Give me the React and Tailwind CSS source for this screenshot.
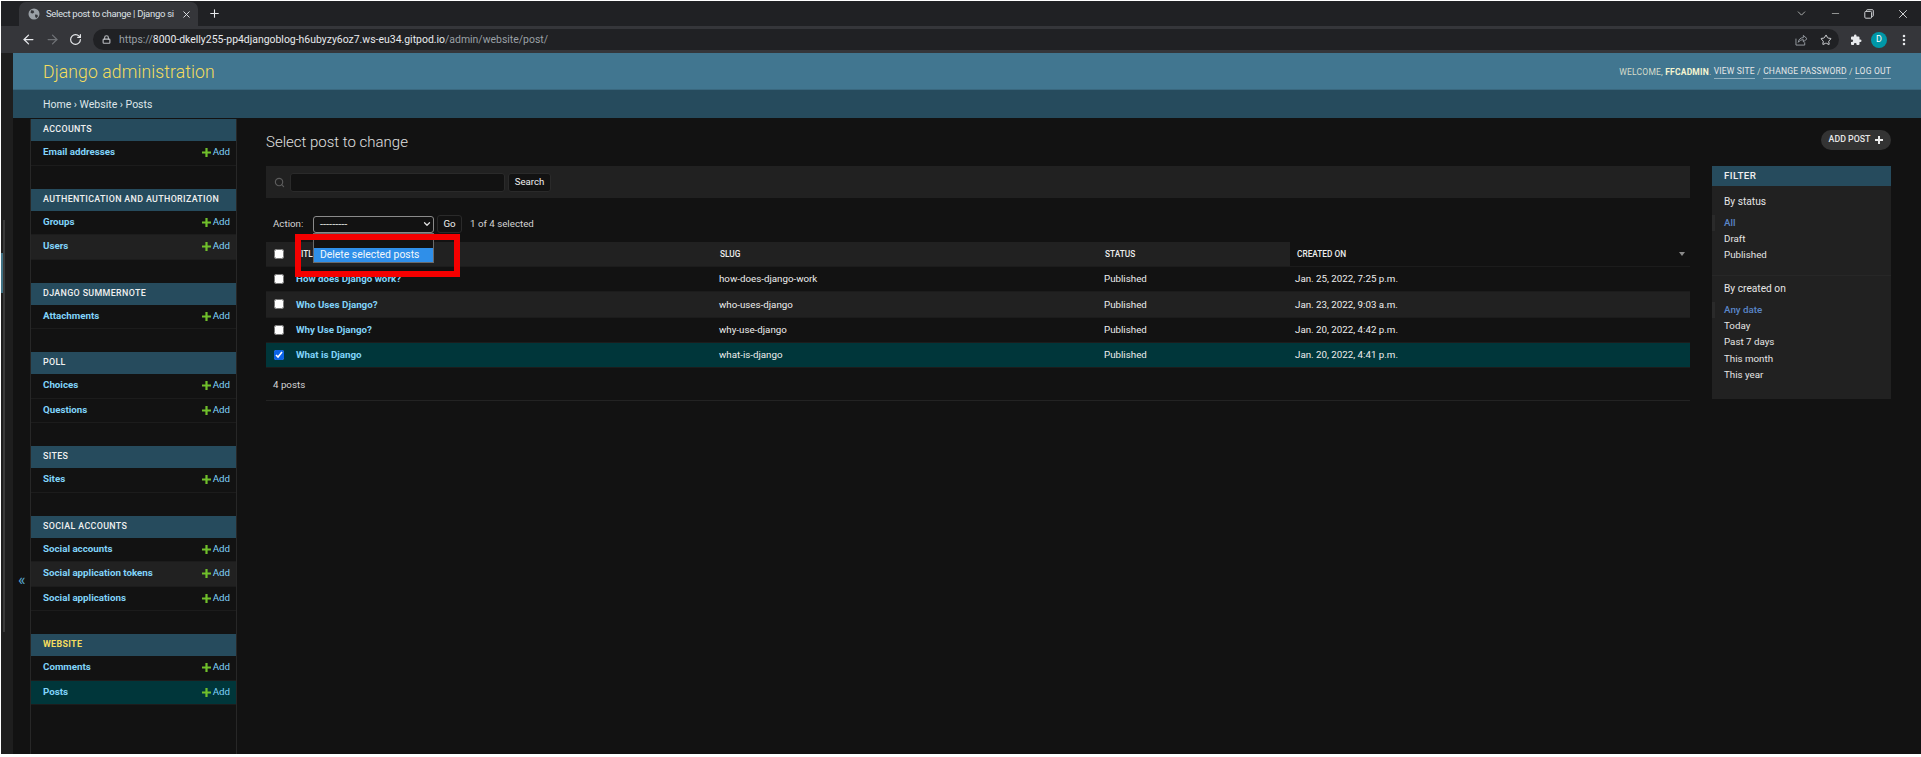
import React from "react";
import { ArrowLeft, ArrowRight, RotateCw, Lock, X, Plus, ChevronDown, Minus, Star, EllipsisVertical, Search } from "lucide-react";

const modules = [
  { name: "ACCOUNTS", rows: ["Email addresses"] },
  { name: "AUTHENTICATION AND AUTHORIZATION", rows: ["Groups", "Users"] },
  { name: "DJANGO SUMMERNOTE", rows: ["Attachments"] },
  { name: "POLL", rows: ["Choices", "Questions"] },
  { name: "SITES", rows: ["Sites"] },
  { name: "SOCIAL ACCOUNTS", rows: ["Social accounts", "Social application tokens", "Social applications"] },
  { name: "WEBSITE", rows: ["Comments", "Posts"], current: true },
];

const posts = [
  ["How does Django work?", "how-does-django-work", "Jan. 25, 2022, 7:25 p.m."],
  ["Who Uses Django?", "who-uses-django", "Jan. 23, 2022, 9:03 a.m."],
  ["Why Use Django?", "why-use-django", "Jan. 20, 2022, 4:42 p.m."],
  ["What is Django", "what-is-django", "Jan. 20, 2022, 4:41 p.m."],
];

function GreenPlus() {
  return (
    <svg width="9" height="9" viewBox="0 0 9 9" className="shrink-0">
      <path d="M3.4 0h2.2v3.4H9v2.2H5.6V9H3.4V5.6H0V3.4h3.4z" fill="#70bf2b" />
    </svg>
  );
}

function ChromeBar() {
  return (
    <div className="shrink-0 font-['Roboto',sans-serif]">
      <div className="h-[25px] bg-[#202124] flex items-end pl-[18px] pr-[11px] relative">
        <div className="w-[179px] h-[24px] bg-[#35363a] rounded-t-[7px] flex items-center pl-[9px] pr-[6px] text-[#dee1e6] text-[9.5px] tracking-[-0.3px]">
          <svg width="12" height="12" viewBox="0 0 12 12" className="shrink-0">
            <circle cx="6" cy="6" r="5.5" fill="#9aa0a6" />
            <path d="M3 2.2l2.4.4.9 1.6-1.5 1.4-2.2-.6zM7 6.6l2.4.2.6 1.4-1.8 2-1-1.4z" fill="#35363a" />
          </svg>
          <span className="ml-[6px] whitespace-nowrap">Select post to change | Django si</span>
          <X size={11} strokeWidth={2} className="ml-auto text-[#e8eaed]" />
        </div>
        <Plus size={13} strokeWidth={2} className="ml-[10px] mb-[6px] text-[#e8eaed]" />
        <div className="ml-auto flex items-center self-center text-[#c4c7c5]">
          <ChevronDown size={13} strokeWidth={1.5} />
          <Minus size={11} strokeWidth={1.5} className="ml-[22px]" />
          <svg width="10" height="10" viewBox="0 0 10 10" className="ml-[23px]" fill="none" stroke="#d0d3d6" strokeWidth="1">
            <rect x="0.8" y="2.4" width="6.8" height="6.8" rx="1" />
            <path d="M2.6 2.2V1.4c0-.4.3-.7.7-.7h5.2c.4 0 .8.4.8.8v5.2c0 .4-.3.7-.7.7h-.8" />
          </svg>
          <X size={14} strokeWidth={1.5} className="ml-[22px] text-[#e8eaed]" />
        </div>
      </div>
      <div className="h-[27px] bg-[#35363a] flex items-center pl-[20px]">
        <ArrowLeft size={15} strokeWidth={2} className="text-[#e8eaed]" />
        <ArrowRight size={15} strokeWidth={2} className="ml-[9px] text-[#6f7276]" />
        <RotateCw size={13} strokeWidth={2.2} className="ml-[9px] text-[#e8eaed]" />
        <div className="ml-[11px] w-[1746px] h-[21px] rounded-full bg-[#202124] flex items-center pl-[9px] pr-[7px] text-[10.45px] whitespace-nowrap">
          <Lock size={9} strokeWidth={3} className="text-[#b8bbbf]" />
          <span className="ml-[8px] text-[#9aa0a6]">https://</span>
          <span className="text-[#e8eaed]">8000-dkelly255-pp4djangoblog-h6ubyzy6oz7.ws-eu34.gitpod.io</span>
          <span className="text-[#9aa0a6]">/admin/website/post/</span>
          <svg width="13" height="12" viewBox="0 0 14 13" fill="none" stroke="#9aa0a6" strokeWidth="1" className="ml-auto">
            <path d="M1 5v7h9.5V9" />
            <path d="M3.5 9C4 5.5 6 4 9 4V1.5l4 3.6-4 3.5V6.2C6.7 6.2 5 7 3.5 9z" />
          </svg>
          <Star size={12} strokeWidth={2} className="ml-[12px] text-[#d5d7da]" />
        </div>
        <svg width="12" height="12" viewBox="0 0 24 24" className="ml-[11px] shrink-0" fill="#e8eaed">
          <path d="M20.5 11H19V7a2 2 0 0 0-2-2h-4V3.5a2.5 2.5 0 0 0-5 0V5H4a2 2 0 0 0-2 2v3.8h1.5a2.7 2.7 0 0 1 0 5.4H2V20a2 2 0 0 0 2 2h3.8v-1.5a2.7 2.7 0 0 1 5.4 0V22H17a2 2 0 0 0 2-2v-4h1.5a2.5 2.5 0 0 0 0-5z" />
        </svg>
        <div className="ml-[9px] w-[16px] h-[16px] rounded-full bg-[#0097a7] text-white text-[9px] flex items-center justify-center shrink-0">D</div>
        <EllipsisVertical size={14} strokeWidth={2.4} className="ml-[10px] text-[#e8eaed]" />
      </div>
    </div>
  );
}

function Sidebar() {
  return (
    <div className="w-[207px] shrink-0 border-x border-[#272727] bg-[#121212]">
      {modules.map((m) => (
        <div key={m.name} className="mb-[23px]">
          <div className={`h-[22px] bg-[#264b5d] pl-[12px] flex items-center whitespace-nowrap text-[8.9px] tracking-[0.35px] ${m.current ? "font-bold text-[#f5dd5d]" : "font-medium text-[#f0f0f0]"}`}>
            {m.name}
          </div>
          {m.rows.map((r, i) => (
            <div
              key={r}
              className={`h-[24.5px] flex items-center justify-between pl-[12px] pr-[6px] border-b border-[#1c1c1c] text-[9.75px] ${r === "Posts" ? "bg-[#00363a]" : i === 1 && m.rows.length > 1 && m.name !== "POLL" && m.name !== "WEBSITE" ? "bg-[#212121]" : ""}`}
            >
              <span className="font-bold text-[#81d4fa]">{r}</span>
              <span className="flex items-center gap-[2px] text-[#81d4fa]">
                <GreenPlus />
                Add
              </span>
            </div>
          ))}
        </div>
      ))}
    </div>
  );
}

const rowGrid = "grid grid-cols-[30px_423px_385px_186px_1fr] items-center";

function Changelist() {
  return (
    <div className="flex-1 min-w-0">
      <div className="h-[32px] bg-[#212121] flex items-center pl-[8px]">
        <Search size={11} strokeWidth={2.5} className="text-[#5c5c5c]" />
        <div className="ml-[5px] w-[215px] h-[19px] bg-[#121212] border border-[#2a2a2a] rounded-[3px]" />
        <div className="ml-[3px] w-[43px] h-[19px] bg-[#121212] border border-[#2a2a2a] rounded-[3px] flex items-center justify-center text-[9.6px] text-[#f0f0f0]">Search</div>
      </div>
      <div className="h-[44px] relative flex items-center pl-[7px] pt-[8px] text-[9.75px] text-[#d5d5d5]">
        <span className="w-[30px]">Action:</span>
        <div className="ml-[10px] w-[121px] h-[17px] bg-[#121212] border border-[#8a8a8a] rounded-[3px] flex items-center justify-between pl-[6px] pr-[1px] text-[#e0e0e0]">
          <span className="leading-none text-[11px]">---------</span>
          <ChevronDown size={10} strokeWidth={3} />
        </div>
        <div className="ml-[3px] w-[25px] h-[18px] bg-[#121212] border border-[#2a2a2a] rounded-[3px] flex items-center justify-center text-[#f0f0f0]">Go</div>
        <span className="ml-[8px]">1 of 4 selected</span>
        <div className="absolute left-[47px] top-[35px] w-[121px] h-[30px] bg-[#121212] border border-[#6a6a6a] text-[10.4px] text-[#e8e8e8] z-10">
          <div className="h-[14px] pl-[6px] leading-[12px]">---------</div>
          <div className="h-[14px] pl-[6px] leading-[14px] bg-[#2f8fe9] text-[#f2f7fb]">Delete selected posts</div>
        </div>
        <div className="absolute left-[29px] top-[36px] w-[165px] h-[43px] border-[6px] border-[#f50000] z-20" />
      </div>
      <div className={`${rowGrid} h-[25px] bg-[#212121] border-b border-[#1c1c1c] text-[8.3px] font-medium text-[#ededed]`}>
        <input type="checkbox" readOnly className="ml-[8px] w-[10px] h-[10px] m-0" />
        <span>TITLE</span>
        <span className="pl-[1px]">SLUG</span>
        <span className="pl-[1px]">STATUS</span>
        <div className="h-full bg-[#121212] flex items-center justify-between pl-[7px] pr-[5px]">
          <span>CREATED ON</span>
          <svg width="6" height="4" viewBox="0 0 6 4"><path d="M0 0h6L3 4z" fill="#8a8a8a" /></svg>
        </div>
      </div>
      {posts.map((p, i) => (
        <div
          key={p[1]}
          className={`${rowGrid} h-[25.25px] border-b border-[#1c1c1c] text-[9.75px] text-[#eeeeee] ${i === 1 ? "bg-[#212121]" : i === 3 ? "bg-[#00363a]" : ""}`}
        >
          <input type="checkbox" readOnly checked={i === 3} className="ml-[8px] w-[10px] h-[10px] m-0 accent-[#0b63e5]" />
          <span className="font-bold text-[#81d4fa] pt-[1px]">{p[0]}</span>
          <span className="pt-[1px]">{p[1]}</span>
          <span className="pt-[1px]">Published</span>
          <span className="pl-[5px] pt-[1px]">{p[2]}</span>
        </div>
      ))}
      <div className="h-[33px] border-b border-[#232323] pl-[7px] pt-[2px] flex items-center text-[9.75px] text-[#d5d5d5]">4 posts</div>
    </div>
  );
}

function FilterGroup({ title, items, last }) {
  return (
    <div className={last ? "" : "border-b border-[#272727] pb-[11px] mb-[1px]"}>
      <div className="h-[22px] pl-[12px] pt-[2px] flex items-center text-[10.2px] text-[#e6e6e6]">{title}</div>
      <div className="mt-[3px]">
        {items.map((it, i) => (
          <div
            key={it}
            className={`h-[16.3px] flex items-center text-[9.75px] ${i === 0 ? "pl-[9px] border-l-[3px] border-[#2a2a2a] font-medium text-[#5a86c8]" : "pl-[12px] text-[#e6e6e6]"}`}
          >
            {it}
          </div>
        ))}
      </div>
    </div>
  );
}

function FilterPanel() {
  return (
    <div className="w-[179px] h-[233px] shrink-0 bg-[#212121]">
      <div className="h-[20px] bg-[#264b5d] pl-[12px] flex items-center text-[9.8px] font-medium tracking-[0.4px] text-[#f0f0f0]">FILTER</div>
      <div className="pt-[4px]">
        <FilterGroup title="By status" items={["All", "Draft", "Published"]} />
        <FilterGroup title="By created on" items={["Any date", "Today", "Past 7 days", "This month", "This year"]} last />
      </div>
    </div>
  );
}

export default function App() {
  return (
    <div className="relative w-[1921px] h-[757px] bg-white pl-px pt-px pb-[3px] overflow-hidden font-['Roboto',sans-serif]">
      <div className="h-full flex flex-col bg-[#121212]">
        <ChromeBar />
        <div className="flex-1 min-h-0 flex">
          <div className="w-[12px] shrink-0 bg-[#1e1e1e] relative">
            <div className="absolute left-[2px] top-[167px] w-[2px] h-[412px] bg-[#3a3a3a]" />
            <div className="absolute left-0 top-[200px] w-[2px] h-[40px] bg-[#3f7184]" />
          </div>
          <div className="flex-1 min-w-0 flex flex-col">
            <div className="h-[37px] shrink-0 bg-[#417690] border-b border-[#3a687f] flex items-center justify-between pl-[30px] pr-[30px] pt-[2px]">
              <span className="text-[17.6px] font-light text-[#f5dd5d] tracking-[0.1px]">Django administration</span>
              <div className="text-[8.5px] tracking-[0.2px] text-[#d6dccb] flex items-center">
                <span>WELCOME,&nbsp;</span>
                <b className="text-[#f5f5d0]">FFCADMIN</b>
                <span>.&nbsp;</span>
                <span className="border-b border-[#8fb0c0] text-[#e8e8e8]">VIEW SITE</span>
                <span>&nbsp;/&nbsp;</span>
                <span className="border-b border-[#8fb0c0] text-[#e8e8e8]">CHANGE PASSWORD</span>
                <span>&nbsp;/&nbsp;</span>
                <span className="border-b border-[#8fb0c0] text-[#e8e8e8]">LOG OUT</span>
              </div>
            </div>
            <div className="h-[28px] shrink-0 bg-[#264b5d] flex items-center pl-[30px] pt-[1px] text-[10.5px] text-[#dfe6ea]">
              Home › Website › Posts
            </div>
            <div className="flex-1 min-h-0 flex pt-px">
              <div className="w-[17px] shrink-0 pt-[453px] pl-[5px] text-[16px] leading-none text-[#5aa6d0]">«</div>
              <Sidebar />
              <div className="flex-1 min-w-0 pl-[29px] pr-[30px]">
                <div className="h-[47px] flex items-center justify-between">
                  <span className="text-[15px] font-light text-[#e0e0e0]">Select post to change</span>
                  <div className="w-[70px] h-[20px] mb-[6px] rounded-full bg-[#333333] flex items-center justify-center gap-[5px] text-[8.8px] font-medium text-[#e6e6e6]">
                    ADD POST
                    <svg width="8" height="8" viewBox="0 0 9 9"><path d="M3.4 0h2.2v3.4H9v2.2H5.6V9H3.4V5.6H0V3.4h3.4z" fill="#ededed" /></svg>
                  </div>
                </div>
                <div className="flex gap-[22px] items-start">
                  <Changelist />
                  <FilterPanel />
                </div>
              </div>
            </div>
          </div>
        </div>
      </div>
    </div>
  );
}
